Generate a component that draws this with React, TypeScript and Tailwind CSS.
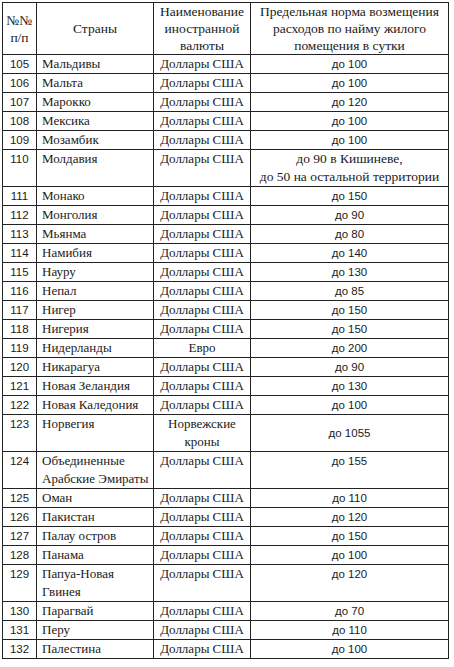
type Row = {
  n: number;
  country: string[];
  cur: string[];
  norm: string[];
  h?: 1 | 2;
  midNorm?: boolean;
};

const rows: Row[] = [
  { n: 105, country: ["Мальдивы"], cur: ["Доллары США"], norm: ["до 100"] },
  { n: 106, country: ["Мальта"], cur: ["Доллары США"], norm: ["до 100"] },
  { n: 107, country: ["Марокко"], cur: ["Доллары США"], norm: ["до 120"] },
  { n: 108, country: ["Мексика"], cur: ["Доллары США"], norm: ["до 100"] },
  { n: 109, country: ["Мозамбик"], cur: ["Доллары США"], norm: ["до 100"] },
  {
    n: 110,
    country: ["Молдавия"],
    cur: ["Доллары США"],
    norm: ["до 90 в Кишиневе,", "до 50 на остальной территории"],
    h: 2,
  },
  { n: 111, country: ["Монако"], cur: ["Доллары США"], norm: ["до 150"] },
  { n: 112, country: ["Монголия"], cur: ["Доллары США"], norm: ["до 90"] },
  { n: 113, country: ["Мьянма"], cur: ["Доллары США"], norm: ["до 80"] },
  { n: 114, country: ["Намибия"], cur: ["Доллары США"], norm: ["до 140"] },
  { n: 115, country: ["Науру"], cur: ["Доллары США"], norm: ["до 130"] },
  { n: 116, country: ["Непал"], cur: ["Доллары США"], norm: ["до 85"] },
  { n: 117, country: ["Нигер"], cur: ["Доллары США"], norm: ["до 150"] },
  { n: 118, country: ["Нигерия"], cur: ["Доллары США"], norm: ["до 150"] },
  { n: 119, country: ["Нидерланды"], cur: ["Евро"], norm: ["до 200"] },
  { n: 120, country: ["Никарагуа"], cur: ["Доллары США"], norm: ["до 90"] },
  { n: 121, country: ["Новая Зеландия"], cur: ["Доллары США"], norm: ["до 130"] },
  { n: 122, country: ["Новая Каледония"], cur: ["Доллары США"], norm: ["до 100"] },
  {
    n: 123,
    country: ["Норвегия"],
    cur: ["Норвежские", "кроны"],
    norm: ["до 1055"],
    h: 2,
    midNorm: true,
  },
  {
    n: 124,
    country: ["Объединенные", "Арабские Эмираты"],
    cur: ["Доллары США"],
    norm: ["до 155"],
    h: 2,
  },
  { n: 125, country: ["Оман"], cur: ["Доллары США"], norm: ["до 110"] },
  { n: 126, country: ["Пакистан"], cur: ["Доллары США"], norm: ["до 120"] },
  { n: 127, country: ["Палау остров"], cur: ["Доллары США"], norm: ["до 150"] },
  { n: 128, country: ["Панама"], cur: ["Доллары США"], norm: ["до 100"] },
  {
    n: 129,
    country: ["Папуа-Новая", "Гвинея"],
    cur: ["Доллары США"],
    norm: ["до 120"],
    h: 2,
  },
  { n: 130, country: ["Парагвай"], cur: ["Доллары США"], norm: ["до 70"] },
  { n: 131, country: ["Перу"], cur: ["Доллары США"], norm: ["до 110"] },
  { n: 132, country: ["Палестина"], cur: ["Доллары США"], norm: ["до 100"] },
];

const serif = "font-['Liberation_Serif',serif]";
const sans = "font-['Liberation_Sans',sans-serif]";

function Lines({ items }: { items: string[] }) {
  return (
    <>
      {items.map((t, i) => (
        <div key={i}>{t}</div>
      ))}
    </>
  );
}

export default function App() {
  return (
    <div className="bg-white w-[454px] h-[667px] pt-[2px] pl-[2px] text-[#1b1b1b]">
      <table className="border-collapse table-fixed w-[446px]">
        <colgroup>
          <col className="w-[34px]" />
          <col className="w-[117px]" />
          <col className="w-[97px]" />
          <col className="w-[198px]" />
        </colgroup>
        <thead>
          <tr className={`h-[50px] text-[13.5px] leading-[17px] ${serif}`}>
            <th className="border border-[#222] font-normal p-0 text-center align-middle">
              <div>№№</div>
              <div>п/п</div>
            </th>
            <th className="border border-[#222] font-normal p-0 text-center align-middle">
              Страны
            </th>
            <th className="border border-[#222] font-normal p-0 text-center align-middle">
              <div>Наименование</div>
              <div>иностранной</div>
              <div>валюты</div>
            </th>
            <th className="border border-[#222] font-normal p-0 text-center align-middle">
              <div>Предельная норма возмещения</div>
              <div>расходов по найму жилого</div>
              <div>помещения в сутки</div>
            </th>
          </tr>
        </thead>
        <tbody>
          {rows.map((r) => (
            <tr
              key={r.n}
              className={`${r.h === 2 ? "h-[37px]" : "h-[18px]"} leading-[18px]`}
            >
              <td className={`border border-[#222] p-0 text-center align-top text-[11.5px] ${sans}`}>
                {r.n}
              </td>
              <td className={`border border-[#222] p-0 pl-[5px] align-top text-[13px] whitespace-nowrap ${serif}`}>
                <Lines items={r.country} />
              </td>
              <td className={`border border-[#222] p-0 text-center align-top text-[13px] whitespace-nowrap ${serif}`}>
                <Lines items={r.cur} />
              </td>
              <td
                className={`border border-[#222] p-0 text-center ${
                  r.midNorm ? "align-middle" : "align-top"
                } ${r.norm.length > 1 ? `text-[13.5px] ${serif}` : `text-[11.5px] ${sans}`}`}
              >
                <Lines items={r.norm} />
              </td>
            </tr>
          ))}
        </tbody>
      </table>
    </div>
  );
}
